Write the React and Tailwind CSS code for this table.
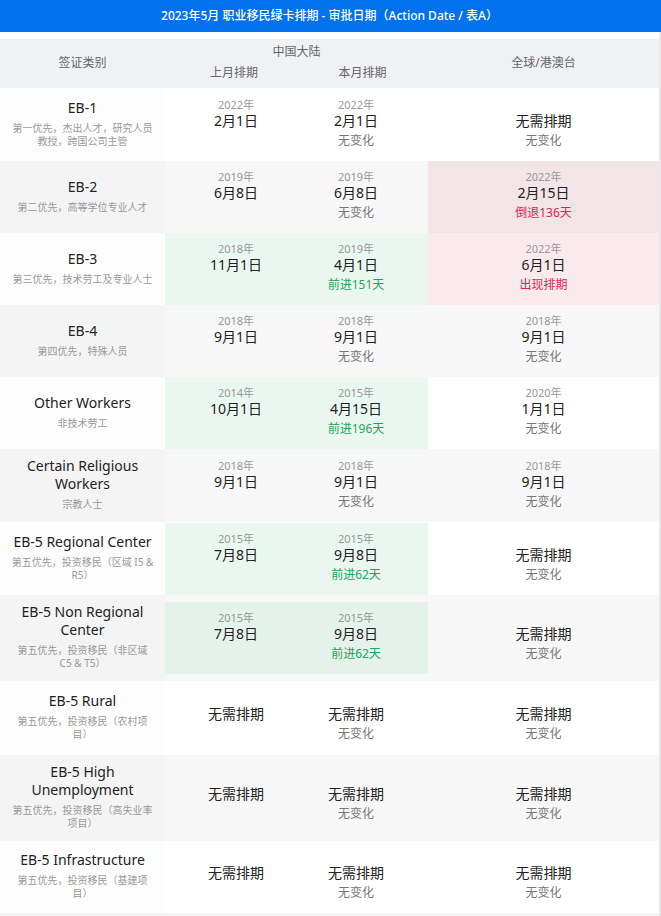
import React from "react";

const FONT = { fontFamily: '"Noto Sans", "Noto Sans CJK SC", sans-serif' };

const rows = [
  { h: "min-h-[73px]", name: ["EB-1"], sub: ["第一优先，杰出人才，研究人员", "教授，跨国公司主管"], c1: { y: "2022年", d: "2月1日" }, c2: { y: "2022年", d: "2月1日", s: "无变化" }, g: { d: "无需排期", s: "无变化" } },
  { h: "min-h-[72px]", name: ["EB-2"], sub: ["第二优先，高等学位专业人才"], c1: { y: "2019年", d: "6月8日" }, c2: { y: "2019年", d: "6月8日", s: "无变化" }, g: { y: "2022年", d: "2月15日", s: "倒退136天", t: "red" }, gh: true },
  { h: "min-h-[72px]", name: ["EB-3"], sub: ["第三优先，技术劳工及专业人士"], c1: { y: "2018年", d: "11月1日" }, c2: { y: "2019年", d: "4月1日", s: "前进151天", t: "green" }, g: { y: "2022年", d: "6月1日", s: "出现排期", t: "red" }, ch: true, gh: true },
  { h: "min-h-[72px]", name: ["EB-4"], sub: ["第四优先，特殊人员"], c1: { y: "2018年", d: "9月1日" }, c2: { y: "2018年", d: "9月1日", s: "无变化" }, g: { y: "2018年", d: "9月1日", s: "无变化" } },
  { h: "min-h-[72px]", name: ["Other Workers"], sub: ["非技术劳工"], c1: { y: "2014年", d: "10月1日" }, c2: { y: "2015年", d: "4月15日", s: "前进196天", t: "green" }, g: { y: "2020年", d: "1月1日", s: "无变化" }, ch: true },
  { h: "min-h-[72px]", name: ["Certain Religious", "Workers"], sub: ["宗教人士"], c1: { y: "2018年", d: "9月1日" }, c2: { y: "2018年", d: "9月1日", s: "无变化" }, g: { y: "2018年", d: "9月1日", s: "无变化" } },
  { h: "min-h-[73px]", name: ["EB-5 Regional Center"], sub: ["第五优先，投资移民（区域 I5 &", "R5）"], c1: { y: "2015年", d: "7月8日" }, c2: { y: "2015年", d: "9月8日", s: "前进62天", t: "green" }, g: { d: "无需排期", s: "无变化" }, ch: true },
  { h: "min-h-[85px]", name: ["EB-5 Non Regional", "Center"], sub: ["第五优先，投资移民（非区域", "C5 & T5）"], c1: { y: "2015年", d: "7月8日" }, c2: { y: "2015年", d: "9月8日", s: "前进62天", t: "green" }, g: { d: "无需排期", s: "无变化" }, ch: true },
  { h: "min-h-[74px]", name: ["EB-5 Rural"], sub: ["第五优先，投资移民（农村项", "目）"], c1: { d: "无需排期" }, c2: { d: "无需排期", s: "无变化" }, g: { d: "无需排期", s: "无变化" } },
  { h: "min-h-[86px]", name: ["EB-5 High", "Unemployment"], sub: ["第五优先，投资移民（高失业率", "项目）"], c1: { d: "无需排期" }, c2: { d: "无需排期", s: "无变化" }, g: { d: "无需排期", s: "无变化" } },
  { h: "min-h-[72px]", name: ["EB-5 Infrastructure"], sub: ["第五优先，投资移民（基建项", "目）"], c1: { d: "无需排期" }, c2: { d: "无需排期", s: "无变化" }, g: { d: "无需排期", s: "无变化" } },
];

function Cell({ v, className }) {
  const statusColor = v.t === "green" ? "text-[#17a85a]" : v.t === "red" ? "text-[#e0264f]" : "text-[#777]";
  return (
    <div className={"flex flex-col items-center justify-center pb-[3px] " + className}>
      <div className={"text-[11px] leading-[14px] text-[#999] " + (v.y ? "" : "invisible")}>{v.y || "0000年"}</div>
      <div className="text-[14px] leading-[18px] text-[#222]">{v.d}</div>
      <div className={"mt-[3px] text-[12px] leading-[16px] " + statusColor + (v.s ? "" : " invisible")}>{v.s || "无变化"}</div>
    </div>
  );
}

export default function App() {
  return (
    <div style={FONT} className="w-[661px] bg-white">
      <div className="flex h-[32px] items-center justify-center bg-[#0072ed] text-[12px] font-medium text-white">
        <span className="pr-[2px]">2023年5月 职业移民绿卡排期 - 审批日期（Action Date / 表A）</span>
      </div>
      <div className="flex">
        <div className="w-[659px]">
          <div className="h-[7px] bg-white" />
          <div className="flex h-[49px] bg-[#f0f1f4] text-[12px] text-[#666]">
            <div className="flex w-[165px] items-center justify-center pb-[1px]">签证类别</div>
            <div className="flex w-[263px] flex-col">
              <div className="pt-[5px] text-center leading-[16px]">中国大陆</div>
              <div className="mt-[5px] flex leading-[16px]">
                <div className="w-[138px] text-center">上月排期</div>
                <div className="w-[125px] pr-[6px] text-center">本月排期</div>
              </div>
            </div>
            <div className="flex w-[231px] items-center justify-center pb-[1px]">全球/港澳台</div>
          </div>
          {rows.map((r, i) => {
            const gray = i % 2 === 1;
            const chBg = r.ch ? (gray ? "bg-[#e4f2eb]" : "bg-[#eaf7f0]") : "";
            const ghBg = r.gh ? (gray ? "bg-[#f3e4e7]" : "bg-[#faeaed]") : "";
            return (
              <div key={i} className={"flex items-center " + (gray ? "bg-[#f7f7f7]" : "bg-white")}>
                <div className={"flex w-[165px] flex-col items-center justify-center self-stretch px-[8px] pt-[8px] pb-[11px] text-center " + r.h + " " + (gray ? "bg-[#f4f4f4]" : "bg-[#fdfdfd]")}>
                  {r.name.map((n, k) => (
                    <div key={k} className="whitespace-nowrap text-[14px] leading-[18px] text-[#222]">{n}</div>
                  ))}
                  <div className="mt-[5px]">
                    {r.sub.map((s, k) => (
                      <div key={k} className="whitespace-nowrap text-[10px] leading-[13px] text-[#999]">{s}</div>
                    ))}
                  </div>
                </div>
                <div className={"flex h-[72px] w-[263px] " + chBg}>
                  <Cell v={r.c1} className="w-[142px]" />
                  <Cell v={r.c2} className="w-[121px] pr-[23px]" />
                </div>
                <Cell v={r.g} className={"h-[72px] w-[231px] " + ghBg} />
              </div>
            );
          })}
          <div className="h-[20px] bg-[#f4f4f4]" />
        </div>
        <div className="w-[2px] bg-[#e8e8e8]" />
      </div>
    </div>
  );
}
